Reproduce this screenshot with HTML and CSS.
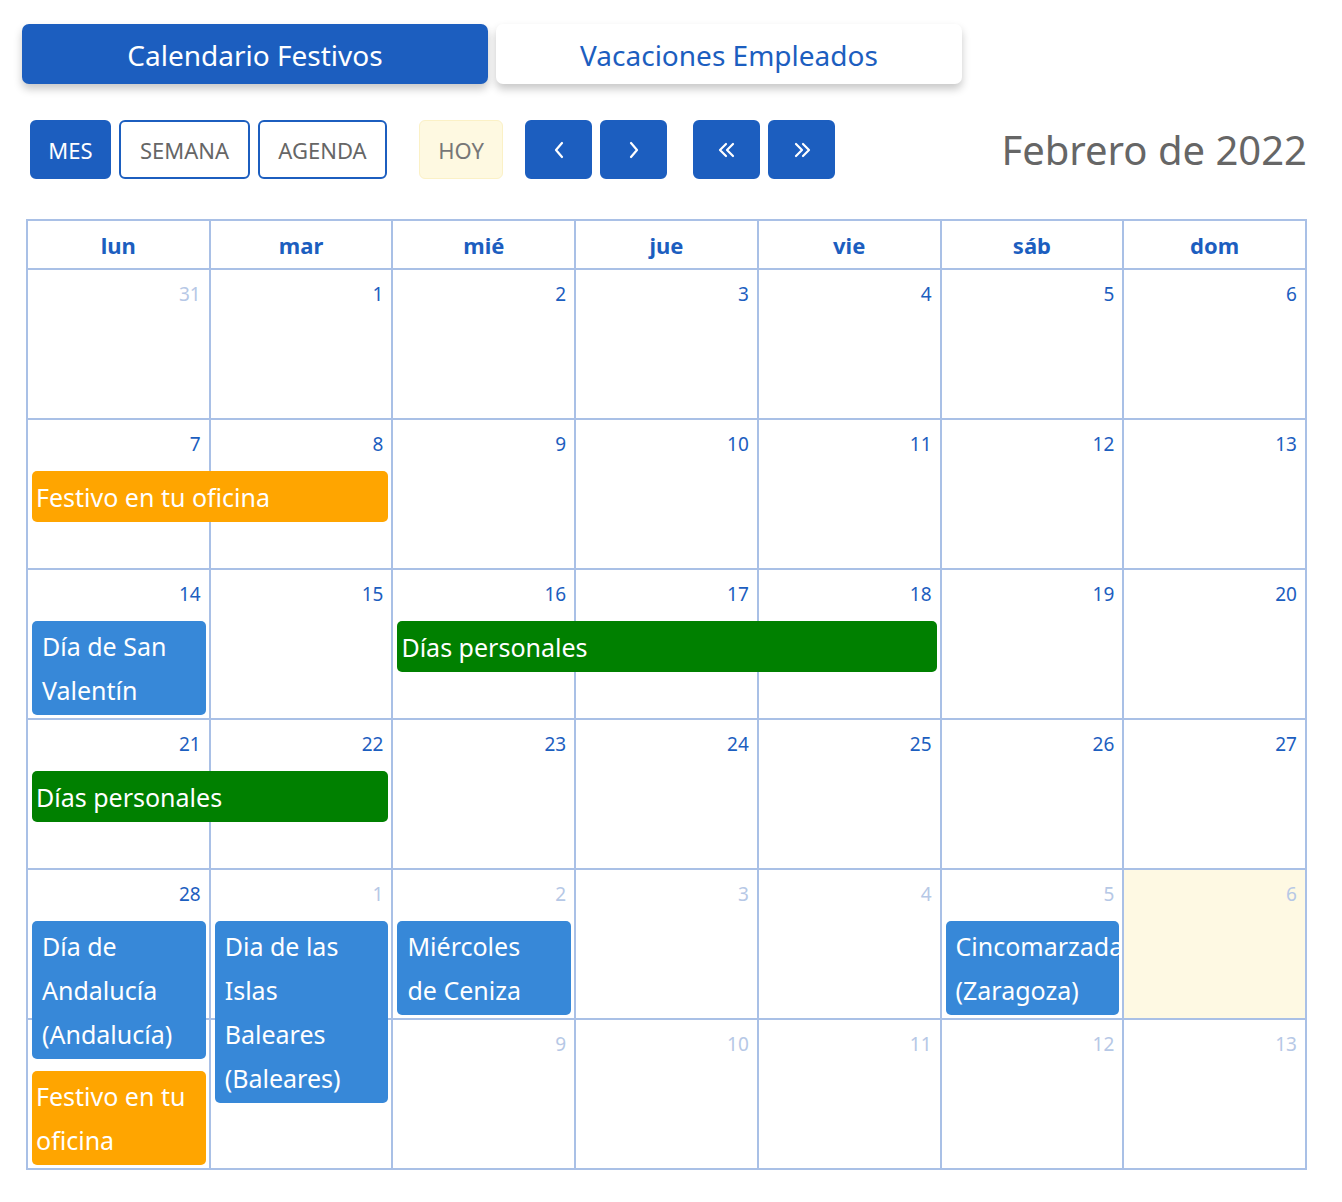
FILE: index.html
```html
<!DOCTYPE html>
<html lang="es">
<head>
<meta charset="utf-8">
<title>Calendario</title>
<link rel="stylesheet" href="styles.css">
</head>
<body>
<div class="page">
  <div class="tabs">
    <div class="tab tab-active">Calendario Festivos</div>
    <div class="tab">Vacaciones Empleados</div>
  </div>

  <div class="toolbar">
    <div class="group">
      <button class="btn btn-primary btn-mes">MES</button>
      <button class="btn btn-outline btn-semana">SEMANA</button>
      <button class="btn btn-outline btn-agenda">AGENDA</button>
    </div>
    <button class="btn btn-today">HOY</button>
    <div class="group">
      <button class="btn btn-primary btn-icon"><svg width="16" height="24" viewBox="0 0 16 24"><path d="M11 5 L5 12 L11 19" fill="none" stroke="#fff" stroke-width="2.2" stroke-linecap="round" stroke-linejoin="round"/></svg></button>
      <button class="btn btn-primary btn-icon"><svg width="16" height="24" viewBox="0 0 16 24"><path d="M5 5 L11 12 L5 19" fill="none" stroke="#fff" stroke-width="2.2" stroke-linecap="round" stroke-linejoin="round"/></svg></button>
    </div>
    <div class="group">
      <button class="btn btn-primary btn-icon"><svg width="24" height="24" viewBox="0 0 24 24"><path d="M11 6 L5 12 L11 18 M18 6 L12 12 L18 18" fill="none" stroke="#fff" stroke-width="2.2" stroke-linecap="round" stroke-linejoin="round"/></svg></button>
      <button class="btn btn-primary btn-icon"><svg width="24" height="24" viewBox="0 0 24 24"><path d="M6 6 L12 12 L6 18 M13 6 L19 12 L13 18" fill="none" stroke="#fff" stroke-width="2.2" stroke-linecap="round" stroke-linejoin="round"/></svg></button>
    </div>
    <h2 class="title">Febrero de 2022</h2>
  </div>

  <div class="calendar">
    <div class="head">
      <div class="hcell">lun</div><div class="hcell">mar</div><div class="hcell">mié</div><div class="hcell">jue</div><div class="hcell">vie</div><div class="hcell">sáb</div><div class="hcell">dom</div>
    </div>

    <div class="week">
      <div class="day other"><div class="num">31</div></div>
      <div class="day"><div class="num">1</div></div>
      <div class="day"><div class="num">2</div></div>
      <div class="day"><div class="num">3</div></div>
      <div class="day"><div class="num">4</div></div>
      <div class="day"><div class="num">5</div></div>
      <div class="day"><div class="num">6</div></div>
    </div>

    <div class="week">
      <div class="day"><div class="num">7</div></div>
      <div class="day"><div class="num">8</div></div>
      <div class="day"><div class="num">9</div></div>
      <div class="day"><div class="num">10</div></div>
      <div class="day"><div class="num">11</div></div>
      <div class="day"><div class="num">12</div></div>
      <div class="day"><div class="num">13</div></div>
      <div class="events">
        <div class="ev ev-orange span-1-3">Festivo en tu oficina</div>
      </div>
    </div>

    <div class="week">
      <div class="day"><div class="num">14</div></div>
      <div class="day"><div class="num">15</div></div>
      <div class="day"><div class="num">16</div></div>
      <div class="day"><div class="num">17</div></div>
      <div class="day"><div class="num">18</div></div>
      <div class="day"><div class="num">19</div></div>
      <div class="day"><div class="num">20</div></div>
      <div class="events">
        <div class="stack col-1"><div class="ev ev-blue">Día de San Valentín</div></div>
        <div class="ev ev-green span-3-6">Días personales</div>
      </div>
    </div>

    <div class="week">
      <div class="day"><div class="num">21</div></div>
      <div class="day"><div class="num">22</div></div>
      <div class="day"><div class="num">23</div></div>
      <div class="day"><div class="num">24</div></div>
      <div class="day"><div class="num">25</div></div>
      <div class="day"><div class="num">26</div></div>
      <div class="day"><div class="num">27</div></div>
      <div class="events">
        <div class="ev ev-green span-1-3">Días personales</div>
      </div>
    </div>

    <div class="week">
      <div class="day"><div class="num">28</div></div>
      <div class="day other"><div class="num">1</div></div>
      <div class="day other"><div class="num">2</div></div>
      <div class="day other"><div class="num">3</div></div>
      <div class="day other"><div class="num">4</div></div>
      <div class="day other"><div class="num">5</div></div>
      <div class="day other today"><div class="num">6</div></div>
      <div class="events">
        <div class="stack col-1">
          <div class="ev ev-blue">Día de Andalucía (Andalucía)</div>
          <div class="ev ev-orange">Festivo en tu oficina</div>
        </div>
        <div class="stack col-2"><div class="ev ev-blue">Dia de las Islas Baleares (Baleares)</div></div>
        <div class="stack col-3"><div class="ev ev-blue">Miércoles de&nbsp;Ceniza</div></div>
        <div class="stack col-6"><div class="ev ev-blue">Cincomarzada (Zaragoza)</div></div>
      </div>
    </div>

    <div class="week">
      <div class="day other"><div class="num">7</div></div>
      <div class="day other"><div class="num">8</div></div>
      <div class="day other"><div class="num">9</div></div>
      <div class="day other"><div class="num">10</div></div>
      <div class="day other"><div class="num">11</div></div>
      <div class="day other"><div class="num">12</div></div>
      <div class="day other"><div class="num">13</div></div>
    </div>
  </div>
</div>
</body>
</html>
```

FILE: styles.css
```css
* { box-sizing: border-box; }

body {
  margin: 0;
  background: #fff;
  font-family: "Noto Sans", "Open Sans", sans-serif;
  color: #333;
}

.page {
  padding: 24px 35px 0 26px;
}

.tabs {
  display: flex;
  gap: 8px;
  margin-left: -4px;
}

.tab {
  width: 466px;
  height: 60px;
  border-radius: 7px;
  background: #fff;
  color: #1c5ebf;
  font-size: 28px;
  display: flex;
  align-items: center;
  justify-content: center;
  padding-top: 2px;
  box-shadow: 0 5px 9px rgba(0, 0, 0, 0.22);
}

.tab-active {
  background: #1c5ebf;
  color: #fff;
}

.toolbar {
  display: flex;
  align-items: center;
  margin-top: 36px;
  padding-left: 4px;
}

.group {
  display: flex;
  gap: 8px;
}

.btn {
  height: 59px;
  padding: 0;
  border-radius: 6px;
  font-family: inherit;
  font-size: 22px;
  border: 2px solid transparent;
  display: flex;
  align-items: center;
  justify-content: center;
}

.btn-mes { width: 81px; }
.btn-semana { width: 131px; }
.btn-agenda { width: 129px; }

.btn-primary {
  background: #1c5ebf;
  border-color: #1c5ebf;
  color: #fff;
}

.btn-outline {
  background: #fff;
  border-color: #1c5ebf;
  color: #666;
}

.btn-today {
  background: #fef9e1;
  border: 1px solid #fbf1c6;
  color: #777;
  width: 84px;
  margin-left: 32px;
  margin-right: 22px;
}

.btn-icon {
  width: 67px;
}

.group + .group {
  margin-left: 26px;
}

.title {
  margin: 0 0 0 auto;
  font-weight: 400;
  font-size: 40px;
  color: #666;
  line-height: 59px;
}

.calendar {
  margin-top: 40px;
  border-top: 2px solid #a9c0e6;
  border-left: 2px solid #a9c0e6;
}

.head {
  display: grid;
  grid-template-columns: repeat(7, minmax(0, 1fr));
}

.hcell {
  height: 49px;
  border-right: 2px solid #a9c0e6;
  border-bottom: 2px solid #a9c0e6;
  display: flex;
  align-items: center;
  justify-content: center;
  font-weight: 700;
  font-size: 22px;
  color: #1c5ebf;
}

.week {
  display: grid;
  grid-template-columns: repeat(7, minmax(0, 1fr));
  grid-template-rows: 150px;
}

.day {
  grid-row: 1;
  border-right: 2px solid #a9c0e6;
  border-bottom: 2px solid #a9c0e6;
  background: #fff;
}

.day:nth-child(1) { grid-column: 1; }
.day:nth-child(2) { grid-column: 2; }
.day:nth-child(3) { grid-column: 3; }
.day:nth-child(4) { grid-column: 4; }
.day:nth-child(5) { grid-column: 5; }
.day:nth-child(6) { grid-column: 6; }
.day:nth-child(7) { grid-column: 7; }

.day.today {
  background: #fef9e3;
}

.num {
  text-align: right;
  padding: 11px 8px 0 0;
  font-size: 19px;
  line-height: 26px;
  color: #1c5ebf;
}

.other .num {
  color: #b6c8e6;
}

.events {
  grid-row: 1;
  grid-column: 1 / -1;
  z-index: 1;
  display: grid;
  grid-template-columns: repeat(7, minmax(0, 1fr));
  align-items: start;
  align-self: start;
  padding-top: 51px;
}

.stack {
  grid-row: 1;
  display: flex;
  flex-direction: column;
  gap: 12px;
}

.col-1 { grid-column: 1; }
.col-2 { grid-column: 2; }
.col-3 { grid-column: 3; }
.col-6 { grid-column: 6; }
.span-1-3 { grid-column: 1 / 3; grid-row: 1; }
.span-3-6 { grid-column: 3 / 6; grid-row: 1; }

.ev {
  margin: 0 5px 0 4px;
  border-radius: 5px;
  color: #fff;
  font-size: 25px;
  line-height: 44px;
  overflow: hidden;
}

.ev-blue {
  background: #3788d8;
  padding: 3px 10px;
}

.ev-orange {
  background: #ffa500;
  padding: 4px 4px 3px;
}

.ev-green {
  background: #008000;
  padding: 4px 4px 3px;
}

.stack .ev-orange {
  padding: 3px 4px;
}
```
